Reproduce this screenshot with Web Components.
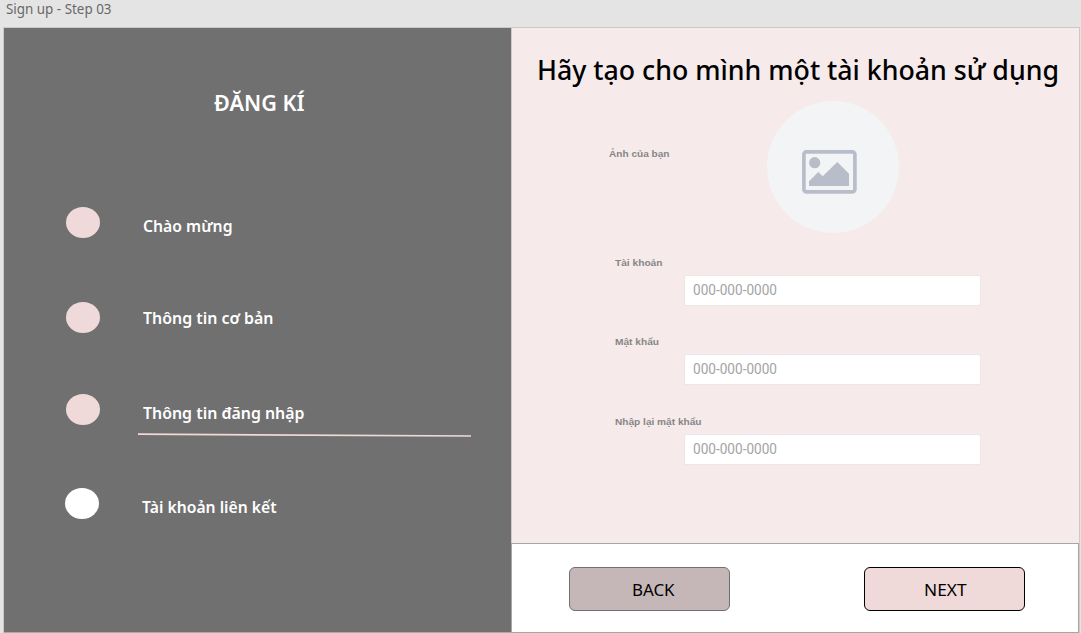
<!DOCTYPE html>
<html lang="vi">
<head>
<meta charset="utf-8">
<title>Sign up - Step 03</title>
<style>
html,body{margin:0;height:100%;overflow:hidden;background:#e4e4e4;font-family:"Noto Sans","Open Sans",sans-serif}
</style>
</head>
<body>
<signup-board></signup-board>
<script>
const define = (name, html, ready) => customElements.define(name, class extends HTMLElement {
  constructor() {
    super();
    this.attachShadow({mode: 'open'}).innerHTML = html;
  }
  connectedCallback() { if (ready) ready(this, this.shadowRoot); }
});

/* One line of text whose glyphs are condensed or widened to a given width. */
define('fit-text', `<style>
:host{display:block;white-space:nowrap}
span{display:inline-block;transform-origin:0 50%}
</style><span><slot></slot></span>`, (el, root) => {
  const s = root.querySelector('span');
  const w = s.getBoundingClientRect().width;
  el.style.width = el.getAttribute('w') + 'px';
  if (w) s.style.transform = `scaleX(${el.getAttribute('w') / w})`;
});

define('step-row', `<style>
:host{display:flex;height:31px;box-sizing:border-box}
i{width:34px;height:31px;border-radius:50%;background:var(--dot,#efd9d9);flex:none}
div{margin-left:var(--gap,43px);padding-top:var(--drop,7px);font-size:16.6px;line-height:24px;font-weight:600;color:#fff}
</style><i></i><div><slot></slot></div>`);

define('step-list', `<style>
:host{display:flex;flex-direction:column;background:#707070;box-sizing:border-box;padding:61.5px 0 0 62px}
h1{margin:0 0 103.5px 148px;font-size:21.7px;line-height:26px;font-weight:600;color:#fff;height:14px}
svg{display:block;margin:3.8px 0 0 -5.5px;overflow:visible}
</style>
<h1><fit-text w="90.5">ĐĂNG KÍ</fit-text></h1>
<step-row><fit-text w="89.5">Chào mừng</fit-text></step-row>
<step-row style="margin-top:64px;--drop:4.4px;--gap:42.7px"><fit-text w="130.5">Thông tin cơ bản</fit-text></step-row>
<step-row style="margin-top:61px;--drop:7.4px"><fit-text w="161.5">Thông tin đăng nhập</fit-text>
<svg width="333" height="12"><path d="M0 5.2L333 7" stroke="#efd9d9" stroke-width="1.7"/></svg></step-row>
<step-row style="margin-top:63.3px;--drop:6.9px;--dot:#fff;margin-left:-.6px"><fit-text w="134.5">Tài khoản liên kết</fit-text></step-row>`);

define('photo-picker', `<style>
:host{display:flex;width:132px;height:132px;border-radius:50%;background:#f2f4f6;flex:none}
svg{margin:49px 0 0 35px;display:block}
</style><svg width="55" height="44" viewBox="0 0 55 44"><rect x="1.9" y="1.9" width="51" height="40" rx="2.6" fill="none" stroke="#b9bdca" stroke-width="3.7"/><circle cx="12.7" cy="12.7" r="5.6" fill="#b9bdca"/><path d="M7 31.3L16.3 22l4.4 4.3L35.3 12 47 23.7V36H7z" fill="#b9bdca"/></svg>`);

define('field-label', `<style>
:host{display:block;font:bold 9.8px/12px "Liberation Sans",Arial,sans-serif;color:#868686;height:12px}
</style><slot></slot>`);

define('text-field', `<style>
:host{display:block;height:79.5px}
.box{margin:6.4px 0 0 69px;width:297px;height:31px;box-sizing:border-box;background:#fff;border:1px solid #ebe7e7;border-radius:2px;padding:0 8px;font:14.3px/29px Roboto,sans-serif;color:#a3a3a3}
</style><field-label><slot></slot></field-label><div class="box"><fit-text w="84">000-000-0000</fit-text></div>`);

define('nav-button', `<style>
:host{display:block;width:161px;height:43px;flex:none}
button{width:161px;height:43.5px;display:flex;justify-content:center;border:1.3px solid var(--line);background:var(--fill);border-radius:6px;padding:10px 0 0 var(--shift,0);box-sizing:border-box;font:16.3px/24px "Noto Sans",sans-serif;color:#000;margin:0;align-items:flex-start}
</style><button><slot></slot></button>`);

define('account-form', `<style>
:host{display:flex;flex-direction:column;background:#f6eaea;box-sizing:border-box;border-left:1px solid #d2c8c8}
h2{margin:22px 0 0 24.5px;font-size:27.4px;line-height:40px;font-weight:500;color:#000;height:51px}
.photo{display:flex;padding-left:97px;height:155.6px}
.photo field-label{width:157.5px;padding-top:47px;flex:none}
.photo fit-text{margin-left:-.5px}
.fields{padding-left:102.5px}
</style>
<h2><fit-text w="522">Hãy tạo cho mình một tài khoản sử dụng</fit-text></h2>
<div class="photo"><field-label><fit-text w="60.5">Ảnh của bạn</fit-text></field-label><photo-picker></photo-picker></div>
<div class="fields">
<text-field><fit-text w="47.5">Tài khoản</fit-text></text-field>
<text-field><fit-text w="44">Mật khẩu</fit-text></text-field>
<text-field><fit-text w="86.5">Nhập lại mật khẩu</fit-text></text-field>
</div>`);

define('nav-bar', `<style>
:host{display:flex;gap:134px;background:#fff;border:1px solid #a6a6a6;box-sizing:border-box;padding:23px 0 0 57px}
</style>
<nav-button style="--fill:#c5b7b7;--line:#707070;--shift:6px"><fit-text w="42.5">BACK</fit-text></nav-button>
<nav-button style="--fill:#efd9d9;--line:#000"><fit-text w="42.5">NEXT</fit-text></nav-button>`);

define('signup-board', `<style>
:host{display:grid;grid-template-rows:27px 606px;width:1081px;height:633px}
header{font-size:13.6px;line-height:18.6px;color:#686868;padding-left:5.7px}
main{display:grid;grid-template-columns:507px 568px;grid-template-rows:515px 90px;border:1px solid #cacaca;border-bottom:0;width:1075px;margin-left:3px}
step-list{grid-row:1/3;border-bottom:1px solid #aaa}
</style>
<header><fit-text w="105.5">Sign up - Step 03</fit-text></header>
<main><step-list></step-list><account-form></account-form><nav-bar></nav-bar></main>`);
</script>
</body>
</html>
